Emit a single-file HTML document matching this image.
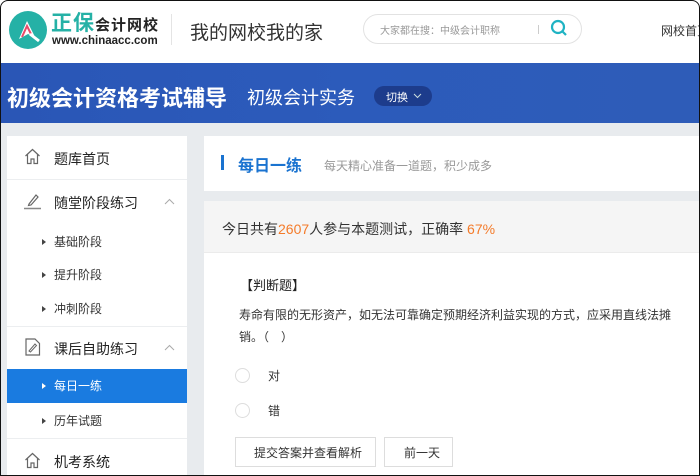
<!DOCTYPE html>
<html><head><meta charset="utf-8"><style>
*{margin:0;padding:0;box-sizing:border-box}
body{width:700px;height:476px;overflow:hidden;font-family:"Liberation Sans","Noto Sans CJK SC",sans-serif;background:#e8ebee;position:relative}
.frame{position:absolute;inset:0;border:1px solid #111;border-radius:8px 8px 0 0;pointer-events:none;z-index:10}
.hdr{position:absolute;left:0;top:0;width:700px;height:63px;background:#fff}
.ban{position:absolute;left:0;top:63px;width:700px;height:60px;background:linear-gradient(90deg,#2a56b6,#2c5bbb 50%,#2e5cb8)}
.side{position:absolute;left:7px;top:136px;width:180px;height:340px;background:#fff}
.it{position:absolute;left:0;width:180px;font-size:14px;color:#222}
.sub{position:absolute;left:0;width:180px;height:34px;line-height:34px;font-size:12px;color:#333;padding-left:47px}
.sub:before{content:"";position:absolute;left:35px;top:14px;border-left:4px solid #444;border-top:3px solid transparent;border-bottom:3px solid transparent}
.div{position:absolute;left:0;width:180px;height:1px;background:#eceef0}
.main{position:absolute;left:204px;width:496px;background:#fff}
.t{position:absolute;white-space:nowrap}
</style></head><body>
<div class="hdr">
  <svg style="position:absolute;left:8px;top:10px" width="40" height="40" viewBox="0 0 40 40"><circle cx="20" cy="20" r="19" fill="#25b1a6"/><path d="M11 29 L19 11 L27 27 L20 24 Z" fill="#fff"/><path d="M14 27 L19 16 L24 26" fill="none" stroke="#e84b6a" stroke-width="2"/><path d="M22 24 L31 31" stroke="#fff" stroke-width="3"/></svg>
  <div class="t" style="left:51px;top:7px;font-size:21px;font-weight:bold;color:#25b1a6;letter-spacing:1px">正保<span style="font-size:15px;color:#222">会计网校</span></div>
  <div class="t" style="left:52px;top:35px;font-size:11.5px;font-weight:bold;color:#222">www.chinaacc.com</div>
  <div style="position:absolute;left:171px;top:14px;width:1px;height:31px;background:#e4e4e4"></div>
  <div class="t" style="left:190px;top:18px;font-size:19px;color:#333">我的网校我的家</div>
  <div style="position:absolute;left:363px;top:14px;width:219px;height:30px;border:1px solid #e2e2e2;border-radius:15px"></div>
  <div class="t" style="left:380px;top:22px;font-size:10px;color:#999">大家都在搜：中级会计职称</div>
  <div style="position:absolute;left:538px;top:25px;width:1px;height:9px;background:#ccc"></div>
  <svg style="position:absolute;left:550px;top:19px" width="18" height="18" viewBox="0 0 18 18"><circle cx="8" cy="8" r="6" fill="none" stroke="#1fb3c3" stroke-width="2.2"/><path d="M12.5 12.5 L16 16" stroke="#1fb3c3" stroke-width="2.2"/></svg>
  <div class="t" style="left:661px;top:22px;font-size:12px;color:#333">网校首页</div>
</div>
<div class="ban">
  <div class="t" style="left:7px;top:18px;font-size:22px;font-weight:bold;color:#fff">初级会计资格考试辅导</div>
  <div class="t" style="left:247px;top:21px;font-size:18px;color:#fff">初级会计实务</div>
  <div style="position:absolute;left:374px;top:23px;width:58px;height:20px;border-radius:10px;background:#1d3c8c"></div>
  <div class="t" style="left:386px;top:26px;font-size:11px;color:#fff">切换</div>
  <svg style="position:absolute;left:413px;top:30px" width="9" height="6"><path d="M1 1 L4.5 4.5 L8 1" fill="none" stroke="#cdd" stroke-width="1"/></svg>
</div>
<div class="side">
  <svg style="position:absolute;left:17px;top:12px" width="17" height="17" viewBox="0 0 17 17"><path d="M1.5 8 L8.5 1.5 L15.5 8 M3.5 6.5 V15.5 H7 V11 H10 V15.5 H13.5 V6.5" fill="none" stroke="#666" stroke-width="1.2"/></svg>
  <div class="it" style="top:13px;left:47px">题库首页</div>
  <div class="div" style="top:43px"></div>
  <svg style="position:absolute;left:17px;top:56px" width="17" height="18" viewBox="0 0 17 18"><path d="M5 12 L12 3 L14 5 L7 13 L4.5 13.5 Z" fill="none" stroke="#666" stroke-width="1.2"/><path d="M0 16.5 H17" stroke="#888" stroke-width="1.5"/></svg>
  <div class="it" style="top:57px;left:47px">随堂阶段练习</div>
  <svg style="position:absolute;left:157px;top:62px" width="11" height="7"><path d="M1 6 L5.5 1.5 L10 6" fill="none" stroke="#aaa"/></svg>
  <div class="sub" style="top:89px">基础阶段</div>
  <div class="sub" style="top:122px">提升阶段</div>
  <div class="sub" style="top:156px">冲刺阶段</div>
  <div class="div" style="top:190px"></div>
  <svg style="position:absolute;left:17px;top:202px" width="17" height="18" viewBox="0 0 17 18"><path d="M2 1 H11 L15.5 5.5 V17 H2 Z" fill="none" stroke="#666" stroke-width="1.2"/><path d="M5 13 L11 6 L12.5 7.5 L6.5 14 Z" fill="none" stroke="#666"/></svg>
  <div class="it" style="top:203px;left:47px">课后自助练习</div>
  <svg style="position:absolute;left:157px;top:208px" width="11" height="7"><path d="M1 6 L5.5 1.5 L10 6" fill="none" stroke="#aaa"/></svg>
  <div class="sub" style="top:233px;background:#1a7be0;color:#fff">每日一练</div>
  <div style="position:absolute;left:35px;top:247px;border-left:4px solid #fff;border-top:3px solid transparent;border-bottom:3px solid transparent"></div>
  <div class="sub" style="top:268px">历年试题</div>
  <div class="div" style="top:302px"></div>
  <svg style="position:absolute;left:17px;top:316px" width="17" height="17" viewBox="0 0 17 17"><path d="M1.5 8 L8.5 1.5 L15.5 8 M3.5 6.5 V15.5 H7 V11 H10 V15.5 H13.5 V6.5" fill="none" stroke="#666" stroke-width="1.2"/></svg>
  <div class="it" style="top:316px;left:47px">机考系统</div>
</div>
<div class="main" style="top:136px;height:55px">
  <div style="position:absolute;left:17px;top:19px;width:3px;height:15px;background:#1a73d0"></div>
  <div class="t" style="left:34px;top:16px;font-size:16px;font-weight:bold;color:#1a73d0">每日一练</div>
  <div class="t" style="left:120px;top:21px;font-size:12px;color:#999">每天精心准备一道题，积少成多</div>
</div>
<div class="main" style="top:201px;height:275px">
  <div style="position:absolute;left:0;top:0;width:496px;height:52px;background:#f5f5f5;border-bottom:1px solid #ebebeb"></div>
  <div class="t" style="left:18px;top:18px;font-size:14px;color:#333">今日共有<span style="color:#f47b2a">2607</span>人参与本题测试，正确率 <span style="color:#f47b2a">67%</span></div>
  <div class="t" style="left:36px;top:74px;font-size:13px;color:#222">【判断题】</div>
  <div class="t" style="left:35px;top:105px;font-size:12px;color:#333">寿命有限的无形资产，如无法可靠确定预期经济利益实现的方式，应采用直线法摊</div>
  <div class="t" style="left:35px;top:127px;font-size:12px;color:#333">销。（　）</div>
  <div style="position:absolute;left:31px;top:167px;width:15px;height:15px;border:1px solid #ddd;border-radius:50%"></div>
  <div class="t" style="left:64px;top:166px;font-size:12px;color:#333">对</div>
  <div style="position:absolute;left:31px;top:202px;width:15px;height:15px;border:1px solid #ddd;border-radius:50%"></div>
  <div class="t" style="left:64px;top:201px;font-size:12px;color:#333">错</div>
  <div style="position:absolute;left:31px;top:236px;width:141px;height:30px;border:1px solid #ddd"></div>
  <div class="t" style="left:50px;top:243px;font-size:12px;color:#333">提交答案并查看解析</div>
  <div style="position:absolute;left:180px;top:236px;width:69px;height:30px;border:1px solid #ddd"></div>
  <div class="t" style="left:200px;top:243px;font-size:12px;color:#333">前一天</div>
</div>
<div class="frame"></div>
</body></html>
